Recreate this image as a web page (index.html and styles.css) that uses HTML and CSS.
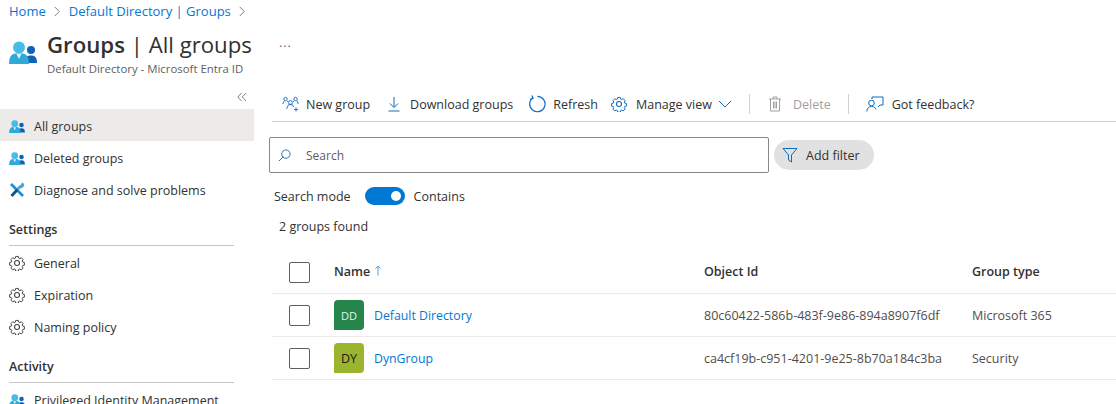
FILE: index.html
```html
<!DOCTYPE html>
<html lang="en">
<head>
    <meta charset="UTF-8">
    <title>Groups | All groups</title>
    <link rel="stylesheet" href="styles.css">
</head>
<body>
    <svg class="defs" width="0" height="0">
        <symbol id="people" viewBox="0 0 28 23">
            <circle cx="22" cy="9" r="4" fill="#0f62b8"/>
            <path d="M15 22c0-5 2.500-7.500 7-7.500s6 2.500 6 7.500z" fill="#0f62b8"/>
            <circle cx="10" cy="6.500" r="6" fill="#45bde6"/>
            <path d="M0 23c0-6.500 2-10 6.500-10.500h7C18 13 20 16.500 20 23z" fill="#2ea9d8"/>
            <path d="M7.500 13l2.500 5 2.500-5z" fill="#e4f5fb"/>
        </symbol>
        <symbol id="gear" viewBox="0 0 16 16">
            <path d="M6.500 .7h3l.4 1.900 1.200.5 1.600-1 2.100 2.100-1 1.600.5 1.200 1.900.4v3l-1.900.4-.5 1.200 1 1.600-2.100 2.100-1.600-1-1.200.5-.4 1.900h-3l-.4-1.900-1.200-.5-1.600 1-2.100-2.100 1-1.600-.5-1.200-1.900-.4v-3l1.900-.4.500-1.200-1-1.600 2.100-2.100 1.600 1 1.200-.5z" transform="translate(.8 .8) scale(.9)" fill="none" stroke="currentColor" stroke-width="1.100"/>
            <circle cx="8" cy="8" r="2.500" fill="none" stroke="currentColor" stroke-width="1.100"/>
        </symbol>
    </svg>

    <nav class="crumbs">
        <a href="#">Home</a>
        <svg class="crumb-sep" viewBox="0 0 8 12"><path d="M1.500 1l5 5-5 5" fill="none" stroke="#737373"/></svg>
        <a href="#">Default Directory | Groups</a>
        <svg class="crumb-sep" viewBox="0 0 8 12"><path d="M1.500 1l5 5-5 5" fill="none" stroke="#737373"/></svg>
    </nav>

    <header class="page-head">
        <svg class="head-icon"><use href="#people"/></svg>
        <div class="head-text">
            <h1><b>Groups</b> | All groups</h1>
            <p>Default Directory - Microsoft Entra ID</p>
        </div>
        <span class="head-more">···</span>
    </header>

    <div class="layout">
        <aside class="sidebar">
            <div class="collapse">
                <svg viewBox="0 0 10 10"><path d="M4.500 1L.8 5l3.700 4M9 1L5.300 5 9 9" fill="none" stroke="#737373" stroke-width=".9"/></svg>
            </div>
            <a class="nav-item active" href="#"><svg class="nav-icon"><use href="#people"/></svg>All groups</a>
            <a class="nav-item" href="#"><svg class="nav-icon"><use href="#people"/></svg>Deleted groups</a>
            <a class="nav-item" href="#">
                <svg class="nav-icon tall" viewBox="0 0 16 16">
                    <path d="M2 2l12 12" stroke="#1b8fd6" stroke-width="2.600"/>
                    <path d="M8.500 7.500L2.500 14" stroke="#1a4f7a" stroke-width="2.800"/>
                    <path d="M8.500 7.500l3.500-3.800" stroke="#3aa9e4" stroke-width="2.600"/>
                    <path d="M15.300 2.800a3.400 3.400 0 0 1-4.800 3l1.500-3.300 1-1.900a3.400 3.400 0 0 1 2.300 2.200z" fill="#3aa9e4"/>
                </svg>
                Diagnose and solve problems
            </a>
            <h2 class="nav-head">Settings</h2>
            <a class="nav-item" href="#"><svg class="nav-icon tall gear"><use href="#gear"/></svg>General</a>
            <a class="nav-item" href="#"><svg class="nav-icon tall gear"><use href="#gear"/></svg>Expiration</a>
            <a class="nav-item" href="#"><svg class="nav-icon tall gear"><use href="#gear"/></svg>Naming policy</a>
            <h2 class="nav-head">Activity</h2>
            <a class="nav-item" href="#"><svg class="nav-icon"><use href="#people"/></svg>Privileged Identity Management</a>
        </aside>

        <main class="content">
            <div class="toolbar">
                <button class="tool tool-new">
                    <svg viewBox="0 0 18 16"><g fill="none" stroke="#0f6cbd" stroke-width=".9"><circle cx="3.500" cy="3" r="1.700"/><circle cx="13.500" cy="3" r="1.700"/><circle cx="8.500" cy="6.500" r="1.900"/><path d="M.8 8l1.500-3.300M5 5l1.200 1M11 6l1-1M16.300 8l-1.200-3.300M4.500 13l2-4.300h4l1 2.300M14 11.500v4M12 13.500h4"/></g></svg>
                    New group
                </button>
                <button class="tool tool-down">
                    <svg viewBox="0 0 14 16"><path d="M7 1v10M3 7.500L7 11.500l4-4M1.500 15h11" fill="none" stroke="#0f6cbd"/></svg>
                    Download groups
                </button>
                <button class="tool tool-refresh">
                    <svg viewBox="0 0 18 18"><path d="M4.800 2.800A7.700 7.700 0 1 0 9.500 1.300M3.900 .4l1.200 2.900-3 .9" fill="none" stroke="#0f6cbd" stroke-width="1.200"/></svg>
                    Refresh
                </button>
                <button class="tool tool-manage">
                    <svg class="tool-gear"><use href="#gear"/></svg>
                    Manage view
                    <svg class="tool-chev" viewBox="0 0 14 8"><path d="M1 1l6 6 6-6" fill="none" stroke="#0f6cbd"/></svg>
                </button>
                <span class="tool-sep"></span>
                <button class="tool tool-delete disabled">
                    <svg viewBox="0 0 14 16"><path d="M1 3h12M5 3V1h4v2M2.500 3v12h9V3M5.500 5.500v7M7 5.500v7M8.500 5.500v7" fill="none" stroke="#a19f9d"/></svg>
                    Delete
                </button>
                <span class="tool-sep"></span>
                <button class="tool tool-feedback">
                    <svg viewBox="0 0 18 16"><g fill="none" stroke="#0f6cbd"><path d="M6 3V1h11v8h-3l-2 2"/><circle cx="5.500" cy="7" r="2.800"/><path d="M.8 15.500c.3-3.500 2-5 4.700-5s4 1 4.500 3"/></g></svg>
                    Got feedback?
                </button>
            </div>

            <div class="filter-row">
                <label class="search">
                    <svg viewBox="0 0 14 14"><path d="M5.500 8.500L1 13M8.500 1a4.500 4.500 0 1 1 0 9 4.500 4.500 0 0 1 0-9z" fill="none" stroke="#0f6cbd"/></svg>
                    <input type="text" placeholder="Search">
                </label>
                <button class="add-filter">
                    <svg viewBox="0 0 16 16"><path d="M1 1.500h14l-5.500 6.500v7l-3-2V8z" fill="none" stroke="#0f6cbd"/></svg>
                    Add filter
                </button>
            </div>

            <div class="mode-row">
                <span>Search mode</span>
                <span class="toggle"><span class="knob"></span></span>
                <span>Contains</span>
            </div>
            <div class="count">2 groups found</div>

            <div class="grid-row grid-head">
                <span class="check"></span>
                <span class="head-cell">Name
                    <svg viewBox="0 0 8 11"><path d="M4 10.500V1M1.500 3.500L4 1l2.500 2.500" fill="none" stroke="#4ea3e0"/></svg>
                </span>
                <span class="head-cell">Object Id</span>
                <span class="head-cell">Group type</span>
            </div>
            <div class="grid-row">
                <span class="check"></span>
                <span class="name-cell"><span class="avatar green">DD</span><a href="#">Default Directory</a></span>
                <span class="cell">80c60422-586b-483f-9e86-894a8907f6df</span>
                <span class="cell">Microsoft 365</span>
            </div>
            <div class="grid-row">
                <span class="check"></span>
                <span class="name-cell"><span class="avatar lime">DY</span><a href="#">DynGroup</a></span>
                <span class="cell">ca4cf19b-c951-4201-9e25-8b70a184c3ba</span>
                <span class="cell">Security</span>
            </div>
        </main>
    </div>
</body>
</html>
```

FILE: styles.css
```css
html, body {
    margin: 0;
    padding: 0;
    height: 404px;
    overflow: hidden;
    background: #fff;
}
body {
    font-family: "Open Sans", "Noto Sans", sans-serif;
    font-size: 12.5px;
    color: #323130;
}
a {
    color: #0078d4;
    text-decoration: none;
}
.defs {
    position: absolute;
}
.crumbs {
    display: flex;
    align-items: center;
    gap: 7.5px;
    height: 22px;
    padding-left: 9px;
    font-size: 13px;
}
.crumb-sep {
    width: 8px;
    height: 11px;
}
.page-head {
    display: flex;
    height: 54px;
    padding-left: 9px;
}
.head-icon {
    width: 28px;
    height: 23px;
    margin-top: 19px;
}
.head-text {
    margin-left: 10px;
}
.head-text h1 {
    margin: 9px 0 0;
    font-size: 22.2px;
    font-weight: 400;
    line-height: 28px;
    white-space: nowrap;
}
.head-text h1 b {
    font-weight: 600;
}
.head-text p {
    margin: 3px 0 0;
    font-size: 11.4px;
    line-height: 14px;
    color: #605e5c;
}
.head-more {
    margin: 16px 0 0 27px;
    letter-spacing: 1px;
    color: #605e5c;
}
.layout {
    display: flex;
}
.sidebar {
    width: 254px;
    flex: none;
}
.collapse {
    display: flex;
    justify-content: flex-end;
    height: 33px;
    padding: 16px 7px 0 0;
    box-sizing: border-box;
}
.collapse svg {
    width: 10px;
    height: 10px;
}
.nav-item {
    display: flex;
    align-items: center;
    height: 32px;
    box-sizing: border-box;
    padding: 2px 0 0 9px;
    color: #323130;
}
.nav-item.active {
    background: #edebe9;
}
.nav-icon {
    width: 16px;
    height: 13px;
    margin-right: 9px;
    flex: none;
}
.nav-icon.tall {
    height: 16px;
}
.gear {
    color: #484644;
}
.nav-head {
    margin: 16px 20px 0 9px;
    padding-bottom: 7px;
    font-size: 12.5px;
    font-weight: 600;
    line-height: 17px;
    border-bottom: 1px solid #c8c6c4;
}
.content {
    flex: 1;
    min-width: 0;
    padding-left: 15px;
}
.toolbar {
    display: flex;
    align-items: center;
    height: 34px;
    margin: 10px 0 0 3px;
    padding: 1px 0 0 10px;
    border-bottom: 1px solid #d2d0ce;
    gap: 17px;
}
.tool {
    display: flex;
    align-items: center;
    gap: 8px;
    padding: 0;
    border: 0;
    background: none;
    font: inherit;
    color: #323130;
    white-space: nowrap;
}
.tool svg {
    width: 16px;
    height: 16px;
    flex: none;
}
.tool-new {
    gap: 6px;
}
.tool-new svg {
    width: 18px;
}
.tool-down {
    gap: 9px;
}
.tool-down svg {
    width: 14px;
}
.tool-refresh {
    gap: 7px;
    margin: 0 -4px 0 -2px;
}
.tool-refresh svg {
    width: 18px;
    height: 18px;
}
.tool-manage {
    gap: 9px;
}
.tool .tool-gear {
    color: #0f6cbd;
}
.tool .tool-chev {
    width: 14px;
    height: 8px;
    margin-left: -3px;
}
.tool-delete {
    gap: 10px;
}
.tool-feedback svg {
    width: 18px;
}
.tool.disabled {
    color: #a19f9d;
}
.tool-sep {
    width: 1px;
    height: 20px;
    background: #d2d0ce;
}
.filter-row {
    display: flex;
    align-items: center;
    margin-top: 15px;
    gap: 5px;
}
.search {
    display: flex;
    align-items: center;
    width: 500px;
    height: 36px;
    box-sizing: border-box;
    border: 1px solid #8a8886;
    border-radius: 2px;
    padding-left: 8px;
}
.search svg {
    width: 13px;
    height: 13px;
    flex: none;
}
.search input {
    flex: 1;
    margin-left: 13px;
    border: 0;
    outline: 0;
    font: inherit;
    font-size: 12px;
}
.search input::placeholder {
    color: #605e5c;
    opacity: 1;
}
.add-filter {
    display: flex;
    align-items: center;
    gap: 8px;
    width: 100px;
    height: 30px;
    box-sizing: border-box;
    padding: 0 0 0 8px;
    border: 0;
    border-radius: 15px;
    background: #e1e1e1;
    font: inherit;
    color: #323130;
}
.add-filter svg {
    width: 16px;
    height: 16px;
}
.mode-row {
    display: flex;
    align-items: center;
    gap: 14px;
    margin: 14px 0 0 5px;
    height: 18px;
}
.mode-row span:last-child {
    margin-left: -5px;
}
.toggle {
    display: flex;
    align-items: center;
    justify-content: flex-end;
    width: 40px;
    height: 18px;
    padding-right: 4px;
    box-sizing: border-box;
    border-radius: 9px;
    background: #0078d4;
}
.knob {
    width: 10px;
    height: 10px;
    border-radius: 50%;
    background: #fff;
}
.count {
    margin: 13px 0 0 10px;
    line-height: 18px;
}
.grid-row {
    display: grid;
    grid-template-columns: 45px 370px 268px 1fr;
    align-items: center;
    height: 42px;
    margin-left: 3px;
    padding-left: 17px;
    border-bottom: 1px solid #edebe9;
}
.cell {
    color: #504e4c;
}
.grid-head {
    margin-top: 16px;
    height: 41px;
    font-weight: 600;
}
.head-cell {
    margin-bottom: 2px;
}
.head-cell svg {
    width: 8px;
    height: 11px;
    margin-left: 1px;
}
.check {
    width: 21px;
    height: 21px;
    box-sizing: border-box;
    border: 1px solid #605e5c;
    border-radius: 2px;
}
.name-cell {
    display: flex;
    align-items: center;
    gap: 10px;
    font-size: 12.3px;
}
.avatar {
    display: flex;
    align-items: center;
    justify-content: center;
    width: 30px;
    height: 30px;
    border-radius: 4px 4px 4px 0;
    font-size: 11px;
}
.green {
    background: #25854b;
    color: #e6f2ea;
}
.lime {
    background: #9bb52f;
    color: #1b1a19;
    font-size: 12.5px;
}
```
